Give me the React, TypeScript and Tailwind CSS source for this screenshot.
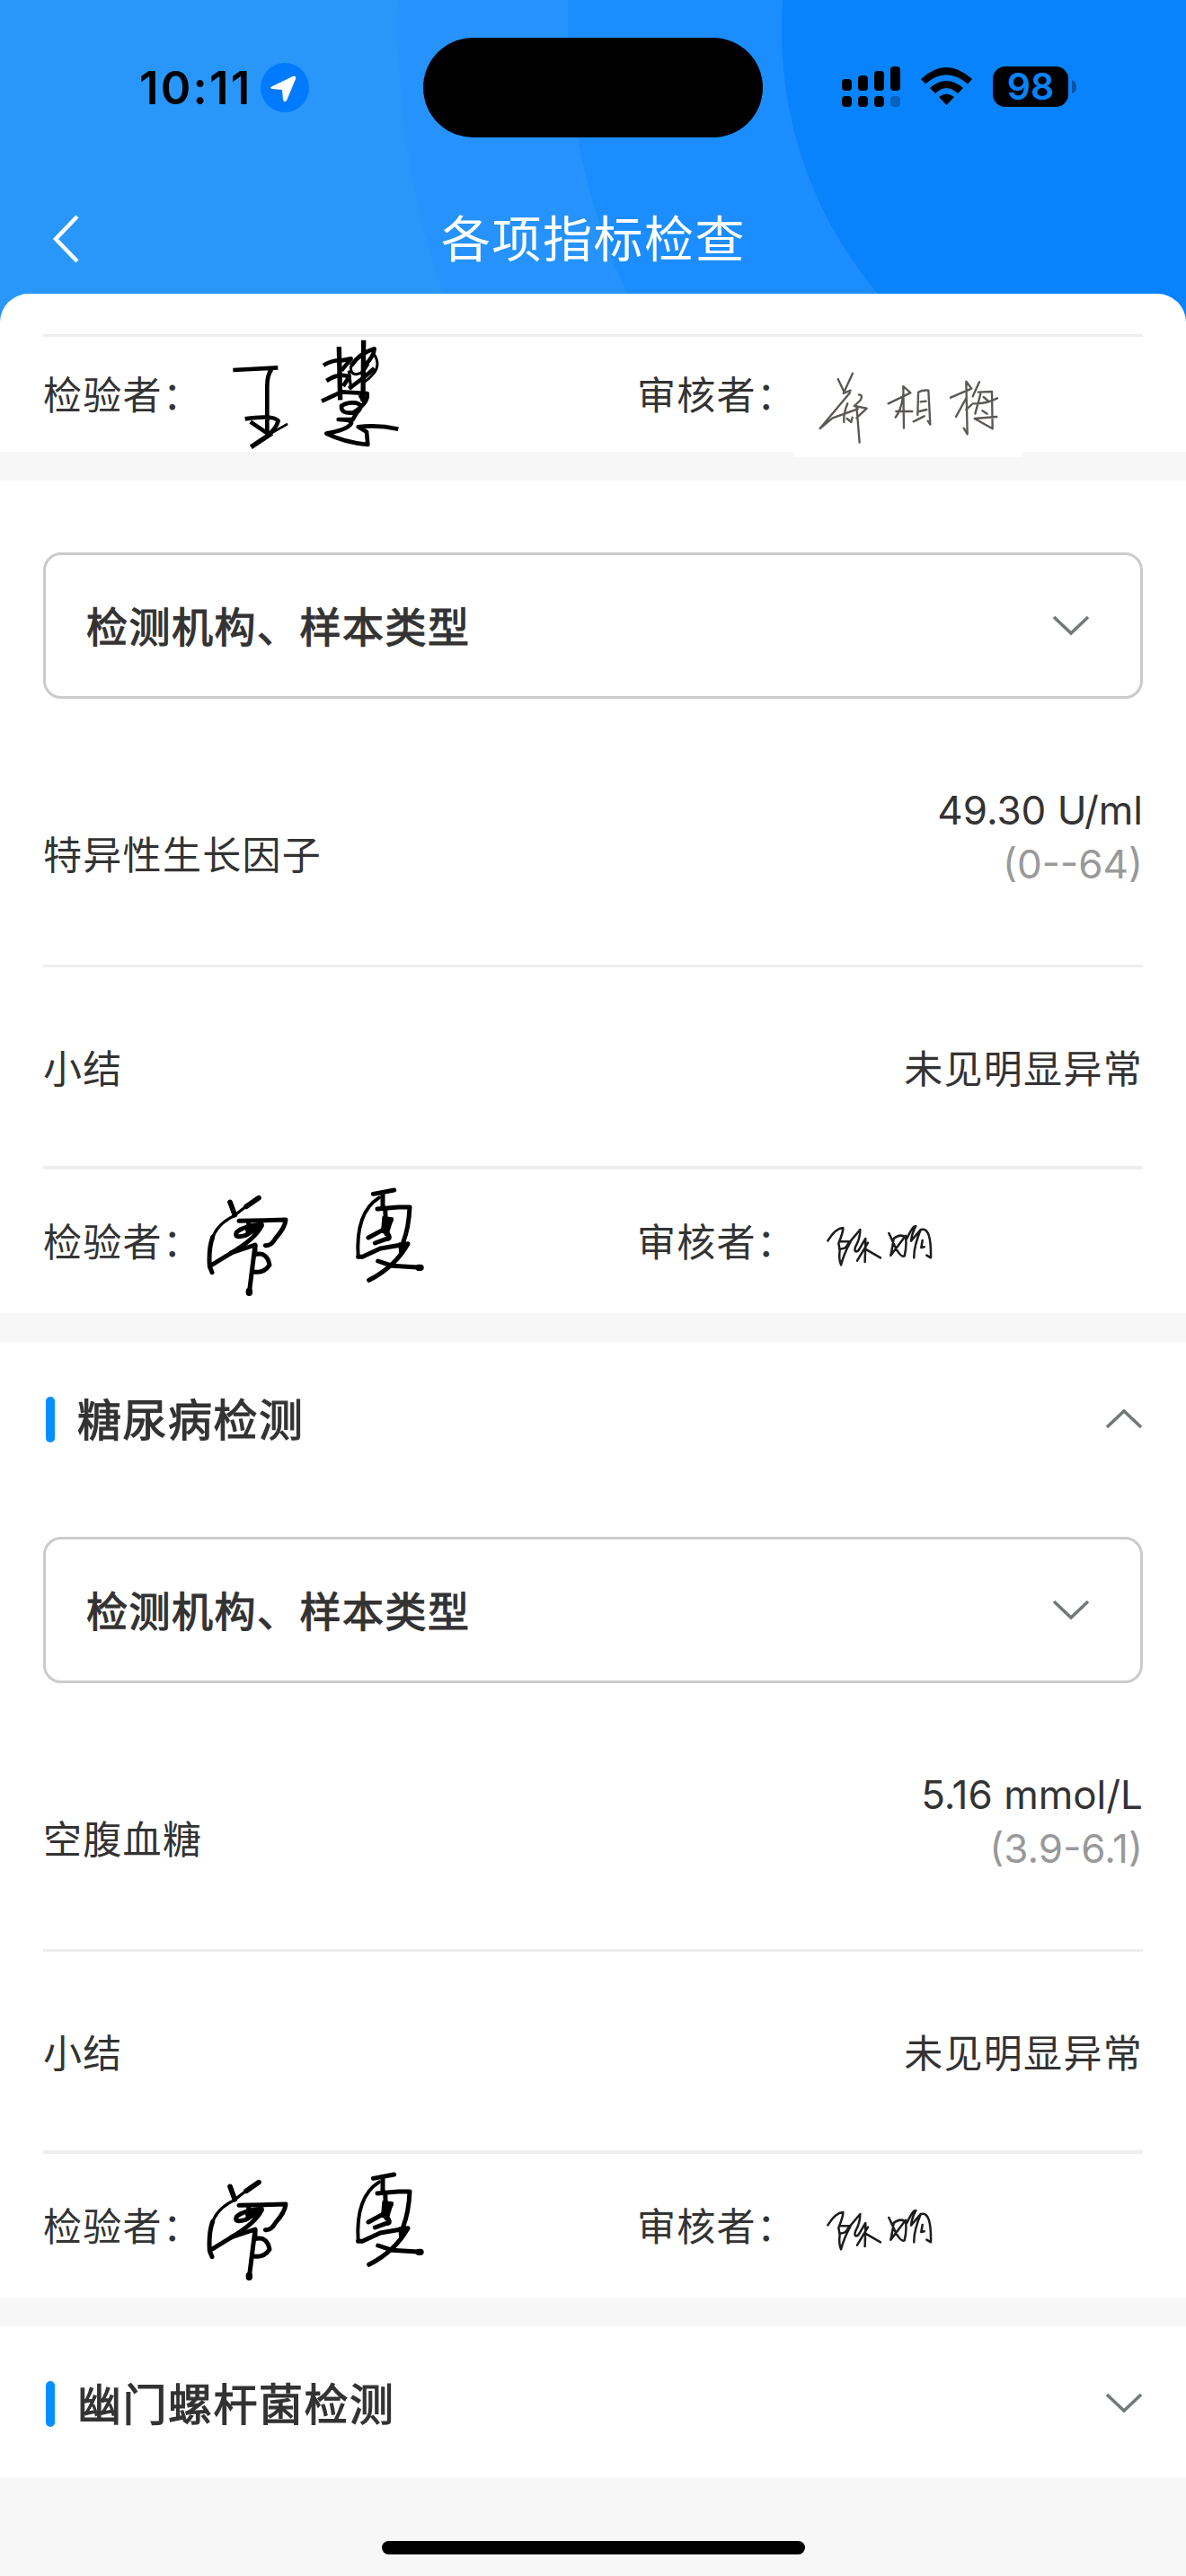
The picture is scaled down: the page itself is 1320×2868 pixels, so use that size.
import type { ReactNode } from "react";

interface Indicator {
  name: string;
  value: string;
  range: string;
}

const indicators: Indicator[] = [
  { name: "特异性生长因子", value: "49.30 U/ml", range: "(0--64)" },
  { name: "空腹血糖", value: "5.16 mmol/L", range: "(3.9-6.1)" },
];

function StatusBar() {
  return (
    <div className="flex h-[194px] items-center">
      <div className="flex w-[471px] items-center pl-[155px]">
        <span className="w-[126px] font-['Inter'] text-[51px] leading-none font-semibold tracking-[2.2px] whitespace-nowrap text-black">
          10:11
        </span>
        <svg className="ml-[9px]" width="54" height="55" viewBox="0 0 54 55">
          <ellipse cx="27" cy="27.5" rx="27" ry="27.5" fill="#007aff" />
          <path
            d="M13 26 36 15Q40 14 39 18L29 42Q26 45 25 41L24 30 13 29Q9 28 13 26Z"
            fill="#fff"
          />
        </svg>
      </div>
      <div className="h-[111px] w-[378px] rounded-full bg-black" />
      <svg className="ml-[88px]" width="262" height="60" viewBox="0 0 262 60">
        <rect x="0" y="21" width="11" height="13" rx="4" />
        <rect x="18" y="17" width="11" height="17" rx="4" />
        <rect x="36" y="12" width="11" height="22" rx="4" />
        <rect x="54" y="7" width="11" height="27" rx="4" />
        <rect x="0" y="40" width="11" height="12" rx="4" />
        <rect x="18" y="40" width="11" height="12" rx="4" />
        <rect x="36" y="40" width="11" height="12" rx="4" />
        <rect x="54" y="40" width="11" height="12" rx="4" opacity="0.25" />
        <path d="M88 21Q116-5 145 21L140 26.500Q116 6 93 26.500ZM98 31Q116 15 135 31L129 37Q116 25 104 37ZM108 41Q116 34 125 41L116.500 50Z" />
        <rect x="168" y="7" width="84" height="45" rx="14" />
        <path d="M256 22Q261 24 261 30T256 37Z" opacity="0.35" />
        <text
          x="210"
          y="44"
          textAnchor="middle"
          fill="#0883fb"
          className="font-['Inter'] text-[41px] font-semibold"
        >
          98
        </text>
      </svg>
    </div>
  );
}

function Header() {
  return (
    <header className="relative h-[360px] overflow-hidden bg-[#2997fa]">
      <svg className="absolute inset-0" width="1320" height="360" viewBox="0 0 1320 360">
        <circle cx="1344" cy="30" r="901" fill="#2593fb" />
        <circle cx="1332" cy="30" r="700" fill="#1c8dfe" />
        <circle cx="1322" cy="35" r="452" fill="#0883fb" />
      </svg>
      <div className="relative">
        <StatusBar />
        <div className="flex h-[142px] items-center">
          <svg className="ml-[58px]" width="32" height="56" viewBox="0 0 32 56">
            <path d="M28 4 4 29 28 54" fill="none" stroke="#fff" strokeWidth="4.500" />
          </svg>
          <h1 className="ml-[401px] pb-[6px] text-[55px] leading-none tracking-[1.5px] text-white">
            各项指标检查
          </h1>
        </div>
      </div>
    </header>
  );
}

function Chevron({ up = false }: { up?: boolean }) {
  return (
    <svg width="42" height="26" viewBox="0 0 42 26">
      <path
        d={up ? "M2 22 21 4 40 22" : "M2 3 21 21 40 3"}
        fill="none"
        stroke="#727977"
        strokeWidth="3.600"
      />
    </svg>
  );
}

function SignatureRow({ inspector, reviewer }: { inspector: ReactNode; reviewer: ReactNode }) {
  return (
    <div className="grid h-full grid-cols-[661px_1fr] text-[43px] tracking-[1.3px]">
      <div className="relative flex items-center pb-1">
        检验者：
        {inspector}
      </div>
      <div className="relative flex items-center pb-1">
        审核者：
        {reviewer}
      </div>
    </div>
  );
}

function WangHuiSignature() {
  return (
    <svg
      className="absolute top-0 left-[172px]"
      width="260"
      height="128"
      viewBox="0 15 780 384"
      fill="none"
      stroke="#000"
      strokeWidth="14"
      strokeLinejoin="round"
    >
      <path d="M118 126 268 118M248 122Q232 140 232 180V335M158 289Q255 275 269 296Q262 320 238 341L176 299" />
      <path d="M178 383 248 337" strokeWidth="16" />
      <path d="M240 340 300 306" strokeWidth="8" />
      <path d="M472 48 476 226M554 26 552 230" strokeWidth="16" />
      <path d="M420 110Q450 92 480 94L512 88 480 128M430 162Q470 135 506 148L486 180M505 188 556 150 590 120M512 112Q540 70 590 55Q588 80 560 108" />
      <path d="M590 74Q612 110 585 140T552 165M512 112Q508 140 530 140T570 105" strokeWidth="9" />
      <path d="M414 230 480 199 566 204Q572 235 520 268Q478 274 480 246 500 232 530 236 558 244 530 270L518 291 470 291Q520 292 512 305 500 325 430 338 490 368 568 375L564 332 536 316Q600 308 670 323" />
      <path d="M505 128 512 190M540 210 556 236" strokeWidth="10" />
    </svg>
  );
}

function ZhengSignature() {
  return (
    <svg
      className="absolute top-0 left-[174px] bg-white"
      width="255"
      height="134"
      viewBox="69 15 765 402"
      fill="none"
      stroke="#5a5855"
      strokeWidth="7"
      strokeLinejoin="round"
      strokeLinecap="round"
    >
      <path d="M218 156 238 198M267 137 236 204 260 194M258 202 158 321M250 238Q236 270 238 300M158 321 200 286 284 256M248 288 262 300 266 284M288 208Q304 210 292 228L272 246 314 254 280 286M280 246 290 368" />
      <path d="M386 238 460 202 436 180 438 320M436 206Q430 260 410 284M412 264 466 264M486 204 484 276M486 200Q500 192 520 194L526 308 518 296M494 232 512 230M490 264 514 258M470 298 506 280" />
      <path d="M594 218 664 188 646 164 650 340 638 320M646 220 612 282M646 258 664 242M690 166 668 214M686 200 732 198 734 322 674 288 748 282M694 206 676 272M668 238Q710 240 750 220M704 216 718 228M700 262 716 272" />
    </svg>
  );
}

function ZengXiaSignature() {
  return (
    <svg
      className="absolute top-0 left-[162px]"
      width="280"
      height="128"
      viewBox="0 6 840 384"
      overflow="visible"
      fill="none"
      stroke="#000"
      strokeWidth="15"
      strokeLinejoin="round"
      strokeLinecap="round"
    >
      <path d="M138 115 154 158M234 101 192 130" strokeWidth="17" />
      <path d="M196 126 150 162Q92 190 78 240" strokeWidth="10" />
      <path d="M80 232Q66 270 70 330L78 350M72 328 144 284 222 258Q212 340 202 418M168 178 250 176 324 174Q322 200 290 236 276 262 256 260" />
      <path d="M200 180V208M244 190Q180 196 160 216 150 238 190 226L244 194Q220 240 140 286M222 262V290Q262 280 270 325 250 354 218 348" />
      <path d="M190 196 238 192 196 228Z" fill="#000" strokeWidth="6" />
      <path d="M202 412V418" strokeWidth="22" />
      <path d="M616 88 686 75M648 84V130M630 138 700 132 738 132Q735 200 716 250M566 298H580L640 270 732 254Q690 330 602 376M632 312 680 328 776 334" />
      <path d="M636 100Q556 150 566 298" strokeWidth="12" />
      <path d="M656 136 660 222M600 234 652 206 676 176M660 214Q680 240 660 238L622 252" />
      <path d="M650 166 680 170 664 222 646 214Z" fill="#000" strokeWidth="8" />
      <path d="M704 254 728 254 706 282Z" fill="#000" strokeWidth="8" />
      <path d="M768 334H774" strokeWidth="22" />
    </svg>
  );
}

function ChenMingSignature() {
  return (
    <svg
      className="absolute top-[27px] left-[171px]"
      width="200"
      height="100"
      viewBox="0 0 600 300"
      fill="none"
      stroke="#1c1c1e"
      strokeWidth="7.500"
      strokeLinejoin="round"
      strokeLinecap="round"
    >
      <path d="M124 157Q150 115 175 114 176 126 160 166L164 188Q160 220 168 238 178 200 200 160L166 160M162 184Q184 186 190 170L232 120Q232 150 216 178 210 200 226 190L250 150 248 228M222 224 258 164M248 184 300 214" />
      <path d="M328 132 350 180Q368 214 380 208 388 180 384 140L334 206Q340 180 344 150 366 132 384 146M388 150Q410 104 418 108 404 134 402 158L434 120Q410 180 412 214M436 120Q470 110 468 214L454 206M440 156 436 180 446 178" />
    </svg>
  );
}

function OrganizationSelect() {
  return (
    <div className="flex h-[163px] items-center justify-between rounded-[20px] border-[3px] border-[#cbcbcb] pr-[56px] pl-[45px]">
      <span className="pb-[3px] text-[46px] tracking-[1.5px] [-webkit-text-stroke:1.2px_#333]">
        检测机构、样本类型
      </span>
      <Chevron />
    </div>
  );
}

function SectionTitle({ title, open = false }: { title: string; open?: boolean }) {
  return (
    <div className="flex items-center">
      <span className="ml-[3px] h-[51px] w-[10px] rounded-full bg-[#0090ff]" />
      <h2 className="ml-[25px] flex-1 pb-1 text-[49px] leading-[68px] tracking-[1.5px] [-webkit-text-stroke:1.2px_#333]">
        {title}
      </h2>
      <Chevron up={open} />
    </div>
  );
}

function IndicatorBody({ item }: { item: Indicator }) {
  return (
    <>
      <OrganizationSelect />
      <div className="mt-[62px] flex h-[237px] items-center justify-between border-b-[3px] border-[#eee]">
        <span className="pb-[16px] text-[43px] tracking-[1.3px]">{item.name}</span>
        <div className="pb-[51px] text-right font-['Inter'] text-[44px] leading-[60px]">
          <p>{item.value}</p>
          <p className="text-[#999]">{item.range}</p>
        </div>
      </div>
      <div className="flex h-[225px] items-center justify-between border-b-4 border-[#eee] text-[43px] tracking-[1.3px]">
        <span>小结</span>
        <span>未见明显异常</span>
      </div>
      <div className="h-[160px]">
        <SignatureRow inspector={<ZengXiaSignature />} reviewer={<ChenMingSignature />} />
      </div>
    </>
  );
}

export default function App() {
  return (
    <div className="min-h-[2868px] w-[1320px] bg-[#f7f7f7] font-['Noto_Sans_CJK_SC',sans-serif] text-[#333]">
      <Header />
      <main className="relative -mt-[33px]">
        <section className="flex h-[176px] flex-col rounded-t-[32px] bg-white px-12 pt-[45px]">
          <div className="border-t-[3px] border-[#eee]" />
          <div className="h-[128px]">
            <SignatureRow inspector={<WangHuiSignature />} reviewer={<ZhengSignature />} />
          </div>
        </section>

        <section className="mt-8 h-[927px] bg-white px-12 pt-[80px]">
          <IndicatorBody item={indicators[0]} />
        </section>

        <section className="mt-8 h-[1064px] bg-white px-12 pt-[50px]">
          <SectionTitle title="糖尿病检测" open />
          <div className="mt-[95px]">
            <IndicatorBody item={indicators[1]} />
          </div>
        </section>

        <section className="mt-8 h-[168px] bg-white px-12 pt-[50px]">
          <SectionTitle title="幽门螺杆菌检测" />
        </section>

        <div className="flex h-[110px] items-end justify-center pb-[24px]">
          <div className="h-[15px] w-[471px] rounded-full bg-black" />
        </div>
      </main>
    </div>
  );
}
